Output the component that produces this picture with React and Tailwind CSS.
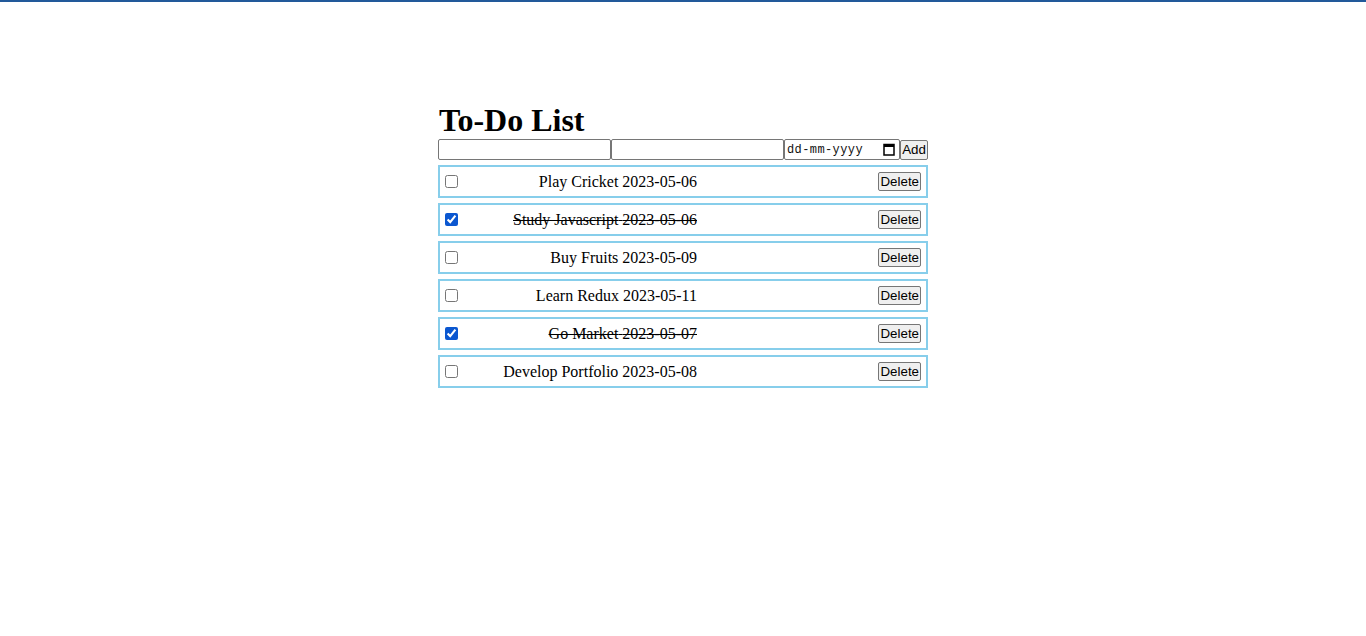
import { useState } from "react";

const initialTodos = [
  { id: 1, title: "Play Cricket", date: "2023-05-06", done: false },
  { id: 2, title: "Study Javascript", date: "2023-05-06", done: true },
  { id: 3, title: "Buy Fruits", date: "2023-05-09", done: false },
  { id: 4, title: "Learn Redux", date: "2023-05-11", done: false },
  { id: 5, title: "Go Market", date: "2023-05-07", done: true },
  { id: 6, title: "Develop Portfolio", date: "2023-05-08", done: false },
];

function CalendarIcon() {
  return (
    <svg width="12" height="13" viewBox="0 0 12 13" className="block">
      <rect x="1" y="1.5" width="10" height="10.5" fill="none" stroke="#000" strokeWidth="1.5" />
      <rect x="1" y="1.5" width="10" height="2.5" fill="#000" />
    </svg>
  );
}

export default function App() {
  const [todos, setTodos] = useState(initialTodos);

  function toggle(id) {
    setTodos((list) =>
      list.map((t) => (t.id === id ? { ...t, done: !t.done } : t))
    );
  }

  function remove(id) {
    setTodos((list) => list.filter((t) => t.id !== id));
  }

  return (
    <div className="min-h-screen bg-white font-['Liberation_Serif',serif] text-black">
      <div className="h-[2px] bg-[#22599a]" />
      <div className="mx-auto w-[490px] pt-[100px]">
        <h1 className="text-[32px] font-bold leading-[37px] pl-[1px]">To-Do List</h1>

        <div className="flex items-center font-['Liberation_Sans',sans-serif] text-[13.33px]">
          <input
            type="text"
            className="h-[21px] w-[173px] border border-[#767676] rounded-[2px] px-[2px] bg-white"
          />
          <input
            type="text"
            className="h-[21px] w-[173px] border border-[#767676] rounded-[2px] px-[2px] bg-white"
          />
          <div className="flex h-[21px] w-[116px] items-center justify-between border border-[#767676] rounded-[2px] pl-[2px] pr-[4px] bg-white">
            <span className="font-['Liberation_Mono',monospace] text-[12px] tracking-[0.4px] text-[#111]">
              dd-mm-yyyy
            </span>
            <CalendarIcon />
          </div>
          <button className="h-[20px] w-[28px] border border-[#767676] rounded-[2px] bg-[#efefef] px-[1px] leading-none">
            Add
          </button>
        </div>

        <ul className="mt-[5px] flex flex-col gap-[5px]">
          {todos.map((t) => (
            <li
              key={t.id}
              className="flex h-[33px] items-center border-2 border-[#87ceeb]"
            >
              <input
                type="checkbox"
                checked={t.done}
                onChange={() => toggle(t.id)}
                className="ml-[5px] h-[13px] w-[13px] accent-[#0b57d0]"
              />
              <span
                className={`w-[239px] text-right text-[16px] ${
                  t.done ? "line-through" : ""
                }`}
              >
                {t.title} {t.date}
              </span>
              <button
                onClick={() => remove(t.id)}
                className="ml-auto mr-[5px] h-[19px] border border-[#767676] rounded-[2px] bg-[#efefef] px-[1px] font-['Liberation_Sans',sans-serif] text-[13.33px] leading-none"
              >
                Delete
              </button>
            </li>
          ))}
        </ul>
      </div>
    </div>
  );
}
